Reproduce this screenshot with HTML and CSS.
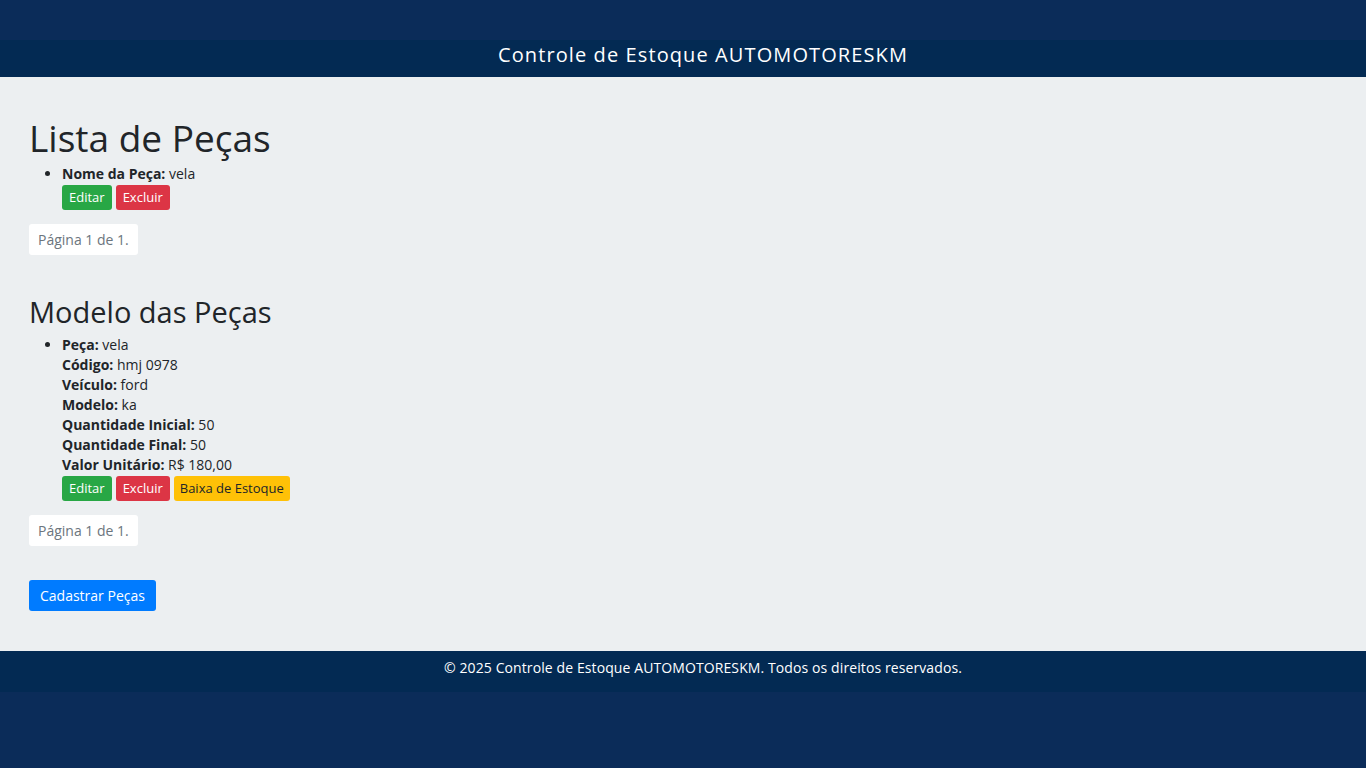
FILE: index.html
```html
<!DOCTYPE html>
<html lang="pt-BR">
<head>
<meta charset="utf-8">
<title>Controle de Estoque AUTOMOTORESKM</title>
<link rel="stylesheet" href="styles.css">
</head>
<body>
<header class="site-header">
  <h1 class="site-title">Controle de Estoque AUTOMOTORESKM</h1>
</header>
<main class="content">
  <section class="section">
    <h2 class="section-title">Lista de Peças</h2>
    <ul class="item-list">
      <li>
        <div class="line"><strong>Nome da Peça:</strong> vela</div>
        <div class="actions">
          <button class="btn btn-sm btn-green">Editar</button>
          <button class="btn btn-sm btn-red">Excluir</button>
        </div>
      </li>
    </ul>
    <div class="pager">Página 1 de 1.</div>
  </section>
  <section class="section">
    <h3 class="section-subtitle">Modelo das Peças</h3>
    <ul class="item-list">
      <li>
        <div class="line"><strong>Peça:</strong> vela</div>
        <div class="line"><strong>Código:</strong> hmj 0978</div>
        <div class="line"><strong>Veículo:</strong> ford</div>
        <div class="line"><strong>Modelo:</strong> ka</div>
        <div class="line"><strong>Quantidade Inicial:</strong> 50</div>
        <div class="line"><strong>Quantidade Final:</strong> 50</div>
        <div class="line"><strong>Valor Unitário:</strong> R$ 180,00</div>
        <div class="actions">
          <button class="btn btn-sm btn-green">Editar</button>
          <button class="btn btn-sm btn-red">Excluir</button>
          <button class="btn btn-sm btn-yellow">Baixa de Estoque</button>
        </div>
      </li>
    </ul>
    <div class="pager">Página 1 de 1.</div>
  </section>
  <div class="footer-actions">
    <button class="btn btn-blue">Cadastrar Peças</button>
  </div>
</main>
<footer class="site-footer">
  <p>© 2025 Controle de Estoque AUTOMOTORESKM. Todos os direitos reservados.</p>
</footer>
</body>
</html>
```
FILE: styles.css
```css
* { box-sizing: border-box; }
html, body { margin: 0; }
body {
  background: #0b2c59;
  padding-top: 40px;
  font-family: "Open Sans", "DejaVu Sans", sans-serif;
  color: #212529;
  font-size: 14px;
  line-height: 20px;
}
.site-header {
  background: #032a53;
  height: 37px;
  padding: 3px 0 0 40px;
  text-align: center;
}
.site-title {
  margin: 0;
  color: #fff;
  font-size: 20px;
  font-weight: 500;
  line-height: 24px;
  letter-spacing: 1.1px;
}
.content {
  background: #eceff1;
  padding: 39px 29px 40px;
}
.section-title {
  margin: 0 0 4px;
  font-size: 37px;
  font-weight: 400;
  line-height: 44px;
}
.section-subtitle {
  margin: 40px 0 6px;
  font-size: 29px;
  font-weight: 400;
  line-height: 34px;
}
.item-list {
  margin: 0;
  padding-left: 33px;
}
.line { height: 20px; }
.line strong { font-weight: 700; }
.actions {
  display: flex;
  gap: 4px;
  margin-top: 1px;
}
.btn {
  font-family: inherit;
  border: 1px solid transparent;
  border-radius: 3px;
  cursor: pointer;
  color: #fff;
}
.btn-sm {
  font-size: 13px;
  line-height: 19px;
  padding: 2px 6px;
  height: 25px;
}
.btn-green { background: #28a745; }
.btn-red { background: #dc3545; }
.btn-yellow { background: #ffc107; color: #212529; padding: 2px 5px; }
.btn-blue {
  background: #007bff;
  font-size: 14px;
  line-height: 20px;
  padding: 4px 10px;
  height: 31px;
}
.pager {
  display: inline-block;
  margin-top: 14px;
  background: #fff;
  color: #6c757d;
  border-radius: 3px;
  padding: 5px 9px;
  height: 31px;
  line-height: 21px;
}
.footer-actions { margin-top: 34px; }
.site-footer {
  background: #032a53;
  height: 41px;
  padding: 7px 0 0 40px;
  text-align: center;
}
.site-footer p {
  margin: 0;
  color: #fff;
  font-size: 14px;
  line-height: 20px;
  letter-spacing: 0.1px;
}
```
